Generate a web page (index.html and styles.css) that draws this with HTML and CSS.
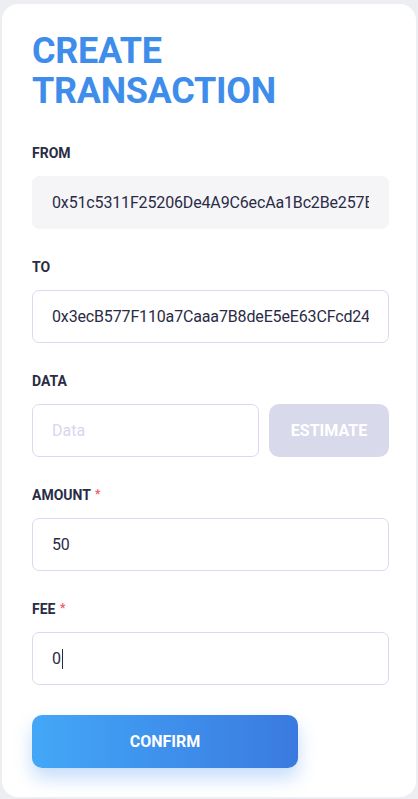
FILE: index.html
```html
<!DOCTYPE html>
<html>
<head>
<meta charset="utf-8">
<link rel="stylesheet" href="styles.css">
</head>
<body>
<div class="card">
  <h1 class="title">CREATE<br>TRANSACTION</h1>
  <div class="fields">
    <div class="field">
      <div class="label">FROM</div>
      <div class="input readonly"><span class="value clip">0x51c5311F25206De4A9C6ecAa1Bc2Be257E4b37C3</span></div>
    </div>
    <div class="field">
      <div class="label">TO</div>
      <div class="input"><span class="value clip">0x3ecB577F110a7Caaa7B8deE5eE63CFcd24c6a9D1</span></div>
    </div>
    <div class="field">
      <div class="label">DATA</div>
      <div class="row">
        <div class="input grow"><span class="placeholder">Data</span></div>
        <button class="estimate">ESTIMATE</button>
      </div>
    </div>
    <div class="field">
      <div class="label">AMOUNT <span class="req">*</span></div>
      <div class="input"><span class="value">50</span></div>
    </div>
    <div class="field">
      <div class="label">FEE <span class="req">*</span></div>
      <div class="input"><span class="value">0</span><span class="caret"></span></div>
    </div>
    <button class="confirm">CONFIRM</button>
  </div>
</div>
</body>
</html>
```
FILE: styles.css
```css
html, body {
  margin: 0;
  padding: 0;
}
body {
  background: #eceef1;
  font-family: Roboto, "Noto Sans", sans-serif;
  height: 799px;
  overflow: hidden;
}
.card {
  margin: 4px 2px 0 2px;
  height: 793px;
  box-sizing: border-box;
  background: #ffffff;
  border-radius: 16px;
  padding: 27px 27px 0 30px;
}
.title {
  margin: 0;
  font-size: 36px;
  line-height: 40px;
  font-weight: 700;
  color: #3f8deb;
  letter-spacing: -0.3px;
}
.fields {
  margin-top: 34px;
  display: flex;
  flex-direction: column;
  gap: 30px;
}
.field {
  display: flex;
  flex-direction: column;
  gap: 15px;
}
.label {
  font-size: 14px;
  line-height: 16px;
  height: 16px;
  font-weight: 700;
  color: #2a2c45;
}
.req {
  color: #ee5a6a;
  font-size: 12px;
  line-height: 0;
  position: relative;
  top: -2px;
  margin-left: 1px;
}
.input {
  height: 53px;
  box-sizing: border-box;
  border: 1px solid #dcd8ef;
  border-radius: 7px;
  display: flex;
  align-items: center;
  padding: 0 19px;
  white-space: nowrap;
  font-size: 16px;
  color: #2a2c45;
}
.input.readonly {
  background: #f5f5f8;
  border-color: #f5f5f8;
}
.value {
  letter-spacing: -0.15px;
}
.clip {
  flex: 1;
  min-width: 0;
  overflow: hidden;
}
.placeholder {
  color: #d8d6ee;
}
.caret {
  display: inline-block;
  width: 1px;
  height: 20px;
  background: #2a2c45;
  margin-left: 1px;
}
.row {
  display: flex;
  gap: 10px;
}
.grow {
  flex: 1;
}
.estimate {
  width: 120px;
  height: 53px;
  border: none;
  border-radius: 10px;
  background: #d9d9ec;
  color: #ffffff;
  font-family: inherit;
  font-size: 16px;
  font-weight: 700;
}
.confirm {
  width: 266px;
  height: 53px;
  border: none;
  border-radius: 10px;
  background: linear-gradient(90deg, #43a7f7, #3a7ae0);
  color: #ffffff;
  font-family: inherit;
  font-size: 16px;
  font-weight: 700;
  box-shadow: 0 10px 18px rgba(66, 140, 240, 0.3);
}
```
